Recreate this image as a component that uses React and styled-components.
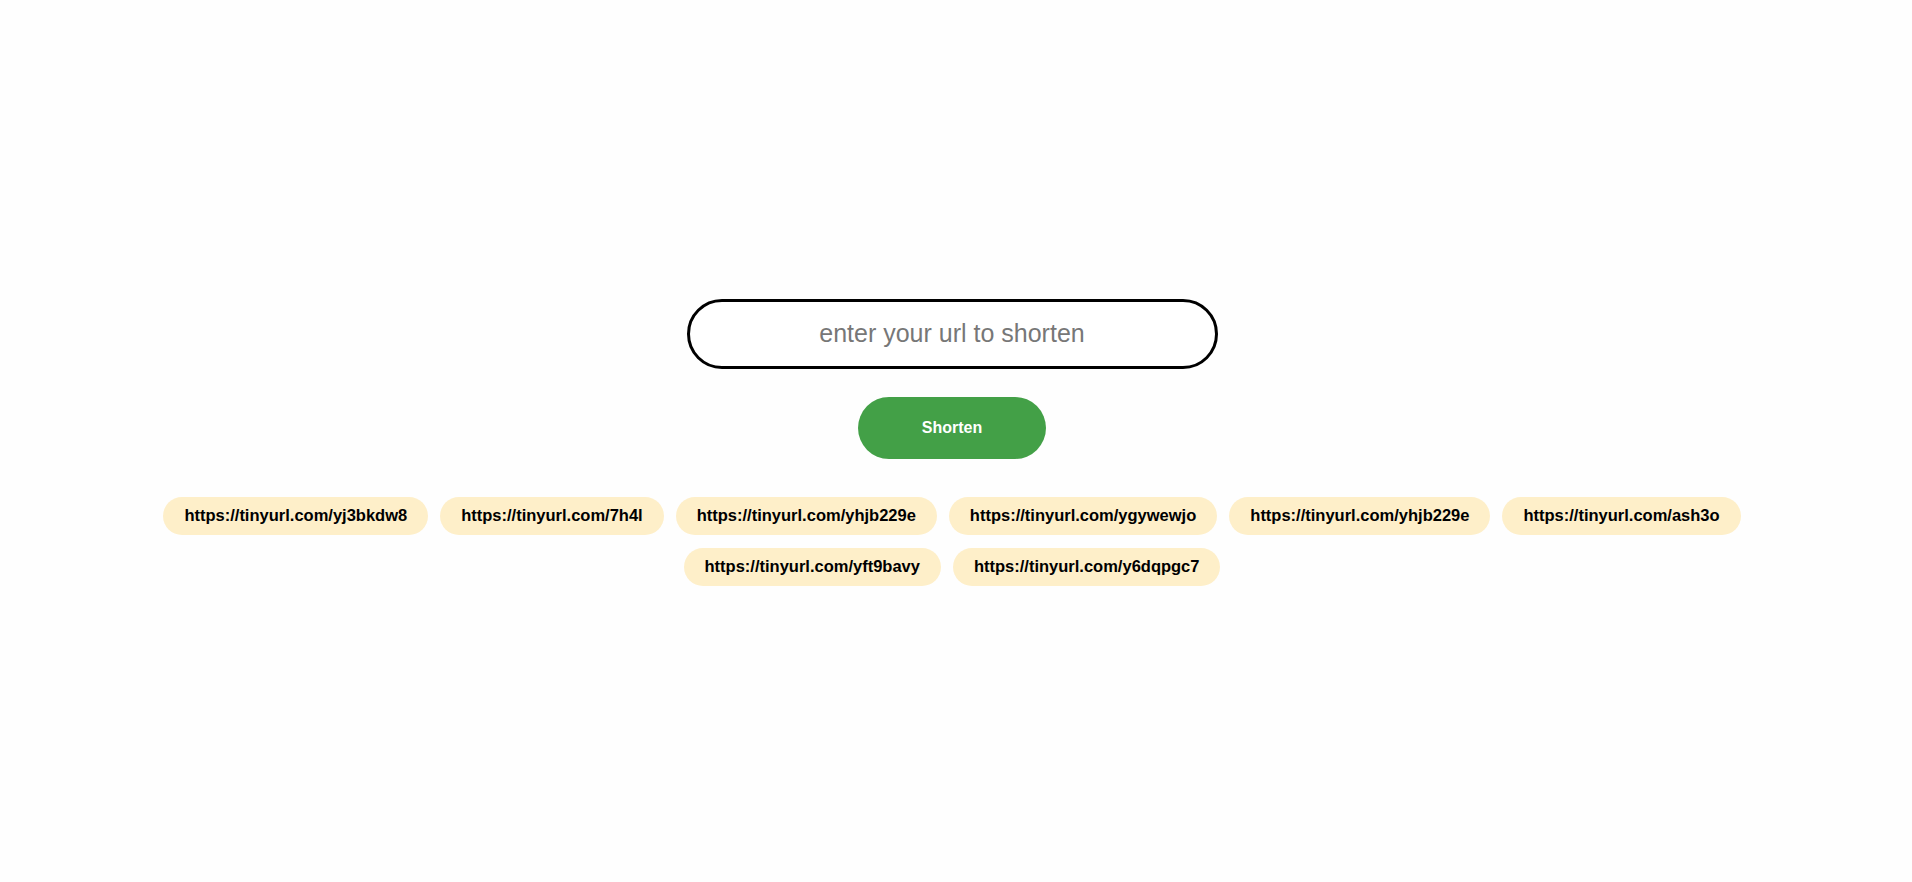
import React, { useState } from 'react'
import styled, { createGlobalStyle } from 'styled-components'

const GlobalStyle = createGlobalStyle`
  * { box-sizing: border-box; }
  html, body {
    margin: 0;
    padding: 0;
    background: #fefefe;
    font-family: "Liberation Sans", Arial, sans-serif;
  }
`

const Page = styled.div`
  min-height: 100vh;
  display: flex;
  flex-direction: column;
  align-items: center;
  justify-content: center;
  padding: 2px 8px 0 0;
`

const Form = styled.form`
  display: flex;
  flex-direction: column;
  align-items: center;
  gap: 28px;
`

const UrlInput = styled.input`
  width: 531px;
  height: 70px;
  border: 3px solid #000;
  border-radius: 35px;
  background: #fff;
  text-align: center;
  font-family: inherit;
  font-size: 25px;
  color: #222;
  outline: none;
  &::placeholder {
    color: #777;
  }
`

const Button = styled.button`
  width: 188px;
  height: 62px;
  border: none;
  border-radius: 31px;
  background: #43a047;
  color: #fff;
  font-family: inherit;
  font-weight: bold;
  font-size: 16px;
  cursor: pointer;
`

const LinkList = styled.div`
  display: flex;
  flex-wrap: wrap;
  justify-content: center;
  gap: 13px 12px;
  max-width: 1620px;
  margin-top: 38px;
`

const Chip = styled.a`
  display: flex;
  align-items: center;
  height: 38px;
  padding: 0 21px;
  border-radius: 19px;
  background: #feefc9;
  color: #000;
  font-weight: bold;
  font-size: 16.5px;
  text-decoration: none;
`

const links = [
  'https://tinyurl.com/yj3bkdw8',
  'https://tinyurl.com/7h4l',
  'https://tinyurl.com/yhjb229e',
  'https://tinyurl.com/ygywewjo',
  'https://tinyurl.com/yhjb229e',
  'https://tinyurl.com/ash3o',
  'https://tinyurl.com/yft9bavy',
  'https://tinyurl.com/y6dqpgc7',
]

export default function App() {
  const [url, setUrl] = useState('')

  return (
    <Page>
      <GlobalStyle />
      <Form onSubmit={(e) => e.preventDefault()}>
        <UrlInput
          type="text"
          placeholder="enter your url to shorten"
          value={url}
          onChange={(e) => setUrl(e.target.value)}
        />
        <Button type="submit">Shorten</Button>
      </Form>
      <LinkList>
        {links.map((link, i) => (
          <Chip key={i} href={link}>{link}</Chip>
        ))}
      </LinkList>
    </Page>
  )
}
